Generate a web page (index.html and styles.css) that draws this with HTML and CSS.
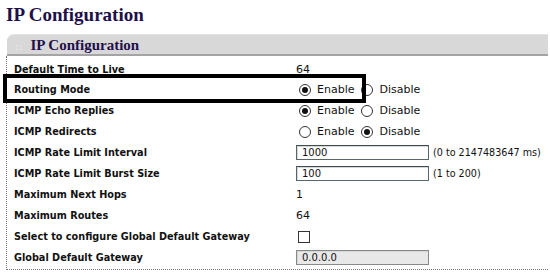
FILE: index.html
```html
<!DOCTYPE html>
<html lang="en">
<head>
    <meta charset="UTF-8">
    <title>IP Configuration</title>
    <link rel="stylesheet" href="styles.css">
</head>
<body>
    <h1 class="page-title">IP Configuration</h1>
    <div class="panel">
        <div class="panel-head"><span class="grip">::</span>IP Configuration</div>
        <div class="panel-body">
            <table class="cfg">
                <tr class="first">
                    <td class="label">Default Time to Live</td>
                    <td class="value">64</td>
                </tr>
                <tr>
                    <td class="label">Routing Mode</td>
                    <td class="value">
                        <span class="radio on"></span><span class="opt">Enable</span><span class="radio"></span><span class="opt">Disable</span>
                    </td>
                </tr>
                <tr>
                    <td class="label">ICMP Echo Replies</td>
                    <td class="value">
                        <span class="radio on"></span><span class="opt">Enable</span><span class="radio"></span><span class="opt">Disable</span>
                    </td>
                </tr>
                <tr>
                    <td class="label">ICMP Redirects</td>
                    <td class="value">
                        <span class="radio"></span><span class="opt">Enable</span><span class="radio on"></span><span class="opt">Disable</span>
                    </td>
                </tr>
                <tr>
                    <td class="label">ICMP Rate Limit Interval</td>
                    <td class="value">
                        <span class="field">1000</span><span class="hint">(0 to 2147483647 ms)</span>
                    </td>
                </tr>
                <tr>
                    <td class="label">ICMP Rate Limit Burst Size</td>
                    <td class="value">
                        <span class="field">100</span><span class="hint">(1 to 200)</span>
                    </td>
                </tr>
                <tr>
                    <td class="label">Maximum Next Hops</td>
                    <td class="value">1</td>
                </tr>
                <tr>
                    <td class="label">Maximum Routes</td>
                    <td class="value">64</td>
                </tr>
                <tr>
                    <td class="label">Select to configure Global Default Gateway</td>
                    <td class="value"><span class="check"></span></td>
                </tr>
                <tr>
                    <td class="label">Global Default Gateway</td>
                    <td class="value"><span class="field disabled">0.0.0.0</span></td>
                </tr>
            </table>
            <div class="callout"></div>
        </div>
    </div>
</body>
</html>
```

FILE: styles.css
```css
body {
    margin: 0;
    background: #fff;
    font-family: "DejaVu Sans", Verdana, sans-serif;
    color: #111;
}
.page-title {
    margin: 0;
    padding: 5px 0 0 6px;
    height: 34px;
    box-sizing: border-box;
    font-family: "Liberation Serif", Georgia, serif;
    font-size: 19px;
    line-height: 20px;
    font-weight: bold;
    color: #1e1048;
}
.panel {
    margin-left: 6px;
    margin-right: 2px;
}
.panel-head {
    height: 19px;
    margin-left: 1px;
    background: #d8d8d8;
    border-top: 1px solid #e4e4e4;
    border-bottom: 2px solid #a4a4a4;
    border-radius: 7px 0 0 0;
    font-family: "Liberation Serif", Georgia, serif;
    font-size: 15px;
    font-weight: bold;
    line-height: 20px;
    color: #1e1048;
    padding-left: 8px;
}
.grip {
    font-family: "DejaVu Sans", sans-serif;
    font-size: 11px;
    font-weight: normal;
    color: #eeeeee;
    margin-right: 8px;
}
.panel-body {
    position: relative;
    border-left: 1px dotted #777;
    border-bottom: 1px dotted #777;
    padding: 3px 0 1px 0;
}
.cfg {
    border-collapse: collapse;
    width: 100%;
}
.cfg td {
    height: 21px;
    padding: 0;
    vertical-align: middle;
}
.cfg tr.first td {
    height: 20px;
}
.label {
    width: 282px;
    padding-left: 7px !important;
    font-size: 9.7px;
    font-weight: bold;
    color: #111;
    white-space: nowrap;
}
.value {
    font-size: 11px;
    color: #111;
    white-space: nowrap;
}
.radio {
    display: inline-block;
    position: relative;
    width: 10px;
    height: 10px;
    border: 1px solid #333;
    border-radius: 50%;
    margin: 0 6px 0 3px;
    vertical-align: middle;
}
.radio.on::after {
    content: "";
    position: absolute;
    left: 2px;
    top: 2px;
    width: 6px;
    height: 6px;
    border-radius: 50%;
    background: #111;
}
.opt {
    display: inline-block;
    vertical-align: middle;
    margin-right: 4px;
}
.field {
    display: inline-block;
    width: 126px;
    height: 13px;
    border: 1px solid #56666a;
    border-top-color: #3e4c50;
    box-shadow: inset 1px 1px 0 #d4d8d8;
    padding: 0 0 0 5px;
    font-size: 10px;
    line-height: 13px;
    vertical-align: middle;
}
.field.disabled {
    background: #e8e8e8;
    border-color: #888;
}
.hint {
    font-size: 9.6px;
    margin-left: 4px;
    vertical-align: middle;
}
.check {
    display: inline-block;
    width: 10px;
    height: 10px;
    border: 1px solid #333;
    margin-left: 2px;
    vertical-align: middle;
}
.callout {
    position: absolute;
    left: -4px;
    top: 18px;
    width: 355px;
    height: 21px;
    border: 4px solid #000;
}
```
